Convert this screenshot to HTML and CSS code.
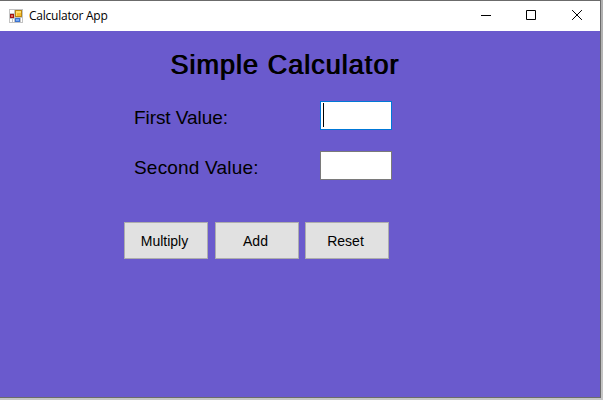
FILE: index.html
```html
<!DOCTYPE html>
<html lang="en">
<head>
<meta charset="utf-8">
<title>Calculator App</title>
<link rel="stylesheet" href="styles.css">
</head>
<body>
<main class="window">
  <header class="titlebar">
    <svg class="app-icon" width="14" height="14" viewBox="0 0 14 14" shape-rendering="crispEdges">
      <path fill="#c3c3c3" d="M0 0h14v14H0z"/>
      <path fill="#fff" d="M1 1h4v3H1zM1 10h2v3H1zM4 10h1v3H4zM12 9h1v4h-1z"/>
      <path fill="#b98613" d="M6 1h7v7H6z"/>
      <path fill="#ffdc68" d="M7 2h5v5H7z"/>
      <path fill="#f7bd2c" d="M8 4h4v3H8z"/>
      <path fill="#a31515" d="M1 5h4v4H1z"/>
      <path fill="#e66a58" d="M2 6h2v2H2z"/>
      <path fill="#3b72cf" d="M6 9h5v4H6z"/>
      <path fill="#77aaf5" d="M7 10h3v2H7z"/>
    </svg>
    <span class="caption">Calculator App</span>
    <div class="controls">
      <svg width="46" height="29" viewBox="0 0 46 29"><path d="M19 14.5h10"/></svg>
      <svg width="46" height="29" viewBox="0 0 46 29"><path d="M18.5 9.5h9v9h-9z"/></svg>
      <svg width="46" height="29" viewBox="0 0 46 29"><path d="M18.1 9.1l9.8 9.8M27.9 9.1l-9.8 9.8"/></svg>
    </div>
  </header>
  <section class="client">
    <h1 class="heading">Simple Calculator</h1>
    <div class="field"><span class="label first">First Value:</span><div class="input focused"><i class="caret"></i></div></div>
    <div class="field"><span class="label second">Second Value:</span><div class="input"></div></div>
    <div class="actions">
      <button class="button">Multiply</button>
      <button class="button">Add</button>
      <button class="button reset">Reset</button>
    </div>
  </section>
</main>
</body>
</html>
```

FILE: styles.css
```css
* { box-sizing: border-box; }
body {
  margin: 0;
  height: 400px;
  overflow: hidden;
  background: linear-gradient(#b0b0b0, #c6c6c6);
  font-family: "Liberation Sans", sans-serif;
  color: #000;
}
.window {
  width: 601px;
  height: 398px;
  border: solid #6b6b6b;
  border-width: 1px 1px 1px 0;
  background: #6a5acd;
}
.titlebar {
  display: flex;
  align-items: center;
  height: 30px;
  padding-left: 9px;
  background: #fff;
}
.app-icon { margin-top: -1px; }
.caption {
  margin: -1px 0 0 6px;
  font: 12px "Open Sans", sans-serif;
  letter-spacing: -0.24px;
  white-space: nowrap;
}
.controls { display: flex; height: 29px; margin-left: auto; align-self: flex-start; }
.controls path { fill: none; stroke: #000; stroke-width: 1; }
.client { padding: 17px 0 0 124px; }
.heading {
  margin: 0 0 18px 46px;
  height: 35px;
  font-size: 27px;
  line-height: 34px;
  font-weight: 400;
  letter-spacing: 1.02px;
  text-shadow: 1px 0 #000;
  white-space: nowrap;
}
.field {
  display: flex;
  height: 29px;
  margin-bottom: 21px;
}
.label {
  width: 186px;
  margin-left: 10px;
  font-size: 19px;
  line-height: 33px;
  white-space: nowrap;
}
.first { letter-spacing: -0.07px; }
.second { letter-spacing: 0.2px; }
.input {
  width: 72px;
  height: 29px;
  padding: 1px 2px;
  border: 1px solid #7a7a7a;
  background: #fff;
}
.focused { border-color: #0078d7; }
.caret { display: block; width: 1px; height: 24px; background: #000; }
.actions { display: flex; gap: 7px; margin-top: 42px; }
.button {
  width: 84px;
  height: 37px;
  padding: 0 3px 0 0;
  border: 1px solid #adadad;
  background: #e1e1e1;
  color: #000;
  font: 14px "Liberation Sans", sans-serif;
}
.reset { margin-left: -1px; }
```
